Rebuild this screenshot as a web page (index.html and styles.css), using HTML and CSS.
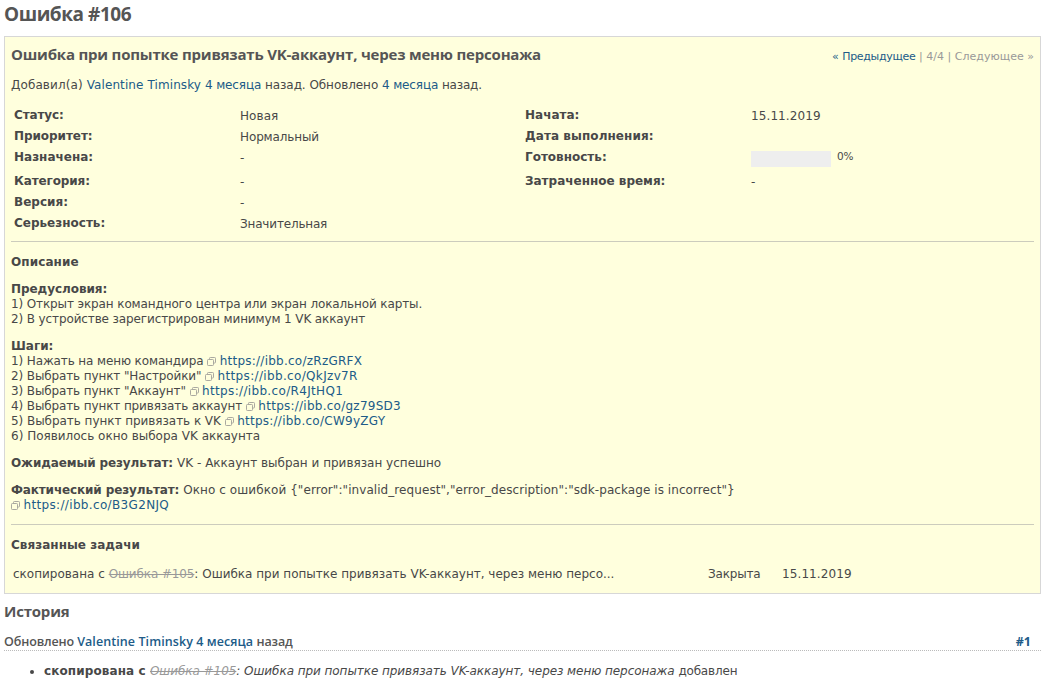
FILE: index.html
```html
<!DOCTYPE html>
<html lang="ru">
<head>
<meta charset="utf-8">
<title>Ошибка #106</title>
<link rel="stylesheet" href="styles.css">
</head>
<body>
<svg class="defs" width="0" height="0" aria-hidden="true">
  <symbol id="external" viewBox="0 0 9 9">
    <path d="M2.5 2.5V1.3Q2.5 .5 3.3 .5H7.7Q8.5 .5 8.5 1.3V5.2Q8.5 6 7.7 6H6.5M1.3 2.5H5.7Q6.5 2.5 6.5 3.3V7.7Q6.5 8.5 5.7 8.5H1.3Q.5 8.5 .5 7.7V3.3Q.5 2.5 1.3 2.5Z" fill="none" stroke="#aaa9a0"/>
  </symbol>
</svg>
<h2><span>Ошибка #106</span></h2>
<div class="issue">
  <div class="top">
    <h3 class="subject">Ошибка при попытке привязать VK-аккаунт, через меню персонажа</h3>
    <div class="nav"><a class="raquo" href="#">« </a><a class="prev" href="#">Предыдущее</a><span class="next"> | 4/4 | Следующее »</span></div>
  </div>
  <p class="author"><span class="w3">Добавил(а) </span><a class="w3" href="#">Valentine Timinsky </a><a class="t3" href="#">4 месяца </a><span class="t2">назад. Обновлено </span><a class="t3" href="#">4 месяца </a><span class="t4">назад.</span></p>
  <div class="attributes">
    <b class="t3">Статус:</b><span class="w2">Новая</span><b>Начата:</b><span class="w3">15.11.2019</span>
    <b class="t2">Приоритет:</b><span class="t3">Нормальный</span><b class="w2">Дата выполнения:</b><span></span>
    <b>Назначена:</b><span>-</span><b>Готовность:</b><div class="progress"><i class="bar"></i><small>0%</small></div>
    <b class="t3">Категория:</b><span>-</span><b>Затраченное время:</b><span>-</span>
    <b class="w1">Версия:</b><span>-</span><b></b><span></span>
    <b>Серьезность:</b><span class="t4">Значительная</span><b></b><span></span>
  </div>
  <hr>
  <div class="description">
    <p><b class="w3">Описание</b></p>
    <p><b class="t2">Предусловия:</b><br><span class="t3">1) Открыт экран командного центра или экран локальной карты.</span><br><span class="t3">2) В устройстве зарегистрирован минимум 1 VK аккаунт</span></p>
    <p><b>Шаги:</b><br>
    <span class="t3">1) Нажать на меню командира </span><a class="ext" href="#"><svg><use href="#external"/></svg>https://ibb.co/zRzGRFX</a><br>
    <span class="t3">2) Выбрать пункт "Настройки" </span><a class="ext wide" href="#"><svg><use href="#external"/></svg>https://ibb.co/QkJzv7R</a><br>
    <span class="t3">3) Выбрать пункт "Аккаунт" </span><a class="ext wide" href="#"><svg><use href="#external"/></svg>https://ibb.co/R4JtHQ1</a><br>
    <span class="t3">4) Выбрать пункт привязать аккаунт </span><a class="ext" href="#"><svg><use href="#external"/></svg>https://ibb.co/gz79SD3</a><br>
    <span class="t1">5) Выбрать пункт привязать к VK </span><a class="ext" href="#"><svg><use href="#external"/></svg>https://ibb.co/CW9yZGY</a><br>
    <span>6) Появилось окно выбора VK аккаунта</span></p>
    <p><b class="t3">Ожидаемый результат: </b><span>VK - Аккаунт выбран и привязан успешно</span></p>
    <p><b class="t3">Фактический результат: </b><span class="w2">Окно с ошибкой {"error":"invalid_request","error_description":"sdk-package is incorrect"}</span><br>
    <a class="ext wide" href="#"><svg><use href="#external"/></svg>https://ibb.co/B3G2NJQ</a></p>
  </div>
  <hr>
  <p class="related-title"><b class="w1">Связанные задачи</b></p>
  <div class="related">
    <div>скопирована с <a class="closed t3" href="#">Ошибка #105</a>: Ошибка при попытке привязать VK-аккаунт, через меню персо...</div>
    <div class="t4">Закрыта</div>
    <div class="w3">15.11.2019</div>
  </div>
</div>
<h3 class="history">История</h3>
<div class="journal">
  <div><span class="j1">Обновлено </span><a class="j2" href="#">Valentine Timinsky 4 месяца </a><span class="j1">назад</span></div>
  <a class="num" href="#">#1</a>
</div>
<ul class="details">
  <li><b class="w3">скопирована с </b><i class="t2"><a class="closed" href="#">Ошибка #105</a>: Ошибка при попытке привязать VK-аккаунт, через меню персонажа </i><span class="t4">добавлен</span></li>
</ul>
</body>
</html>
```
FILE: styles.css
```css
body {
  margin: 0;
  padding: 3px 10px 0 4px;
  background: #fff;
  color: #484848;
  font: 12px/15px "DejaVu Sans", sans-serif;
}
.defs { display: block; }
a { color: #205b88; text-decoration: none; }
p, h2, h3, ul { margin: 0; }
b, span, a, i { white-space: pre; }
h2, h3, .journal { font-family: "Open Sans", sans-serif; color: #555; }
h2 { font-size: 19px; font-weight: 700; line-height: 22px; letter-spacing: -.45px; padding-bottom: 11px; }
h3 { font-size: 15px; font-weight: 700; line-height: 22px; letter-spacing: -.2px; }

.issue {
  height: 558px;
  box-sizing: border-box;
  border: 1px solid #d7d7d7;
  padding: 7px 6px 6px;
  background: #ffffdd;
}
.top { display: flex; justify-content: space-between; }
.subject { line-height: 20px; }
.nav { height: 22px; font-size: 11px; line-height: 25px; color: #999; }
.prev { letter-spacing: -.3px; }
.next { letter-spacing: .02px; }
.author { padding: 12px 0; }
.attributes {
  display: grid;
  grid-template-columns: 226px 285px 226px 1fr;
  grid-template-rows: 21px 21px 24px 21px 21px 21px;
  padding: 3px 3px 4px;
}
.attributes > span { padding-top: 1px; }
.progress { display: flex; gap: 6px; align-items: flex-start; }
.bar { width: 80px; height: 16px; margin-top: 1px; background: #eee; }
small { font-size: 10.5px; line-height: 13px; letter-spacing: -.2px; }
hr { border: 0; height: 1px; margin: 0; background: #ccccbd; }
.description { padding: 13px 0 11px; display: grid; gap: 12px; }
.ext { letter-spacing: .25px; }
.ext.wide { letter-spacing: .34px; }
.ext svg { width: 9px; height: 9px; margin-right: 3.5px; vertical-align: -1px; }
.related-title { padding: 13px 0 14px; }
.related { display: grid; grid-template-columns: 695px 74px 1fr; padding-left: 2px; }
a.closed { color: #999; text-decoration: line-through; }

.history { padding: 6px 0 11px; }
.journal {
  display: flex;
  justify-content: space-between;
  padding-right: 10px;
  border-bottom: 1px dotted #bbb;
  font-size: 12.5px;
  font-weight: 600;
  line-height: 17px;
}
.j1 { letter-spacing: -.13px; }
.j2 { letter-spacing: .08px; }
.num { font-weight: 700; }
.details { padding: 13px 0 0 40px; }

/* tracking steps */
.w1 { letter-spacing: .03px; }
.w2 { letter-spacing: .07px; }
.w3 { letter-spacing: .1px; }
.t1 { letter-spacing: -.045px; }
.t2 { letter-spacing: -.06px; }
.t3 { letter-spacing: -.12px; }
.t4 { letter-spacing: -.18px; }
```
